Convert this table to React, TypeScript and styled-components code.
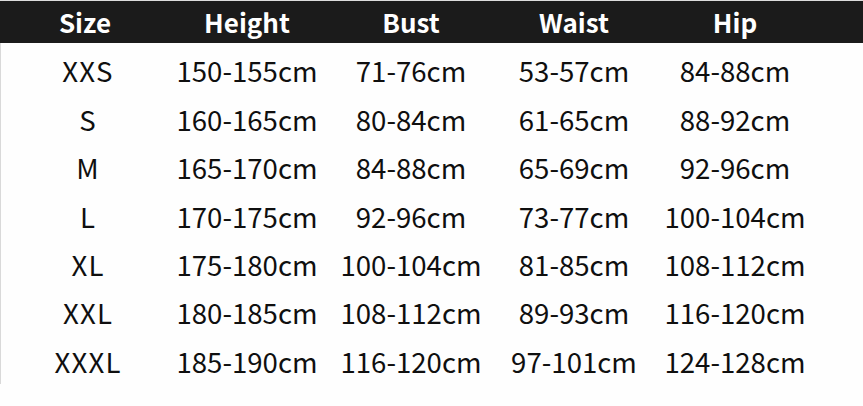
import React, { FC } from "react";
import styled, { createGlobalStyle } from "styled-components";

const GlobalStyle = createGlobalStyle`
  html, body {
    margin: 0;
    padding: 0;
    background: #ffffff;
  }
  body {
    font-family: "Noto Sans CJK SC", "Noto Sans", sans-serif;
  }
`;

const COLUMNS = ["Size", "Height", "Bust", "Waist", "Hip"];

const ROWS: string[][] = [
  ["XXS", "150-155cm", "71-76cm", "53-57cm", "84-88cm"],
  ["S", "160-165cm", "80-84cm", "61-65cm", "88-92cm"],
  ["M", "165-170cm", "84-88cm", "65-69cm", "92-96cm"],
  ["L", "170-175cm", "92-96cm", "73-77cm", "100-104cm"],
  ["XL", "175-180cm", "100-104cm", "81-85cm", "108-112cm"],
  ["XXL", "180-185cm", "108-112cm", "89-93cm", "116-120cm"],
  ["XXXL", "185-190cm", "116-120cm", "97-101cm", "124-128cm"],
];

const Sheet = styled.section`
  width: 863px;
  height: 406px;
  box-sizing: border-box;
  border-top: 1px solid #dcdcdc;
  background: #fefefe;
  overflow: hidden;
`;

const Grid = styled.div`
  display: grid;
  grid-template-columns: 162px 162px 166px 160px 162px;
  padding-left: 4px;
  align-items: center;
  justify-items: center;
`;

const HeaderRow = styled(Grid)`
  height: 42px;
  background: #1b1b1b;
  color: #ffffff;
  font-size: 26px;
  font-weight: 700;
`;

const Body = styled.div`
  padding-top: 4px;
  height: 341px;
  box-sizing: border-box;
  border-left: 1px solid #d9d9d9;
`;

const Row = styled(Grid)`
  height: 48.4px;
  margin-left: -1px;
  color: #0f0f0f;
  font-size: 27.6px;
  font-weight: 400;
`;

const Cell = styled.span<{ $size?: boolean }>`
  white-space: nowrap;
  line-height: 1;
  letter-spacing: ${(p) => (p.$size ? "1.2px" : "0")};
  padding-left: ${(p) => (p.$size ? "6px" : "0")};
`;

const App: FC = () => {
  return (
    <>
      <GlobalStyle />
      <Sheet>
        <HeaderRow>
          {COLUMNS.map((c) => (
            <Cell key={c}>{c}</Cell>
          ))}
        </HeaderRow>
        <Body>
          {ROWS.map((r) => (
            <Row key={r[0]}>
              {r.map((v, i) => (
                <Cell key={i} $size={i === 0}>
                  {v}
                </Cell>
              ))}
            </Row>
          ))}
        </Body>
      </Sheet>
    </>
  );
};

export default App;
